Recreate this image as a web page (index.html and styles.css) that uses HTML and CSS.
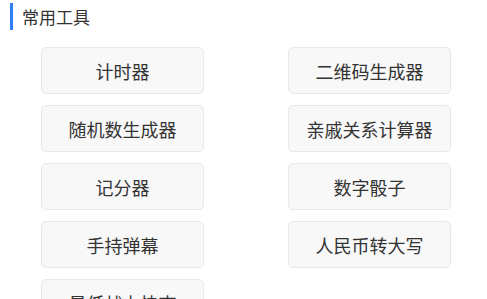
FILE: index.html
```html
<!DOCTYPE html>
<html lang="zh-CN">
<head>
    <meta charset="UTF-8">
    <meta name="viewport" content="width=device-width, initial-scale=1.0">
    <title>常用工具</title>
    <link rel="stylesheet" href="styles.css">
</head>
<body>
    <div class="section">
        <div class="section-title">常用工具</div>
        <div class="tool-grid">
            <button class="tool">计时器</button>
            <button class="tool">二维码生成器</button>
            <button class="tool">随机数生成器</button>
            <button class="tool">亲戚关系计算器</button>
            <button class="tool">记分器</button>
            <button class="tool">数字骰子</button>
            <button class="tool">手持弹幕</button>
            <button class="tool">人民币转大写</button>
            <button class="tool">最低战力快查</button>
        </div>
    </div>
</body>
</html>
```

FILE: styles.css
```css
body {
    margin: 0;
    background-color: #fff;
    font-family: "Noto Sans CJK SC", "Noto Sans", sans-serif;
    color: #333;
    overflow: hidden;
}
.section {
    padding-top: 3px;
}
.section-title {
    margin-left: 10px;
    padding-left: 9px;
    border-left: 3px solid #2f80f5;
    font-size: 17px;
    line-height: 27px;
}
.tool-grid {
    display: grid;
    grid-template-columns: 163px 163px;
    column-gap: 84px;
    row-gap: 11px;
    padding-left: 41px;
    margin-top: 17px;
}
.tool {
    height: 47px;
    background-color: #f8f8f8;
    border: 1px solid #e8e8e8;
    border-radius: 5px;
    font-family: inherit;
    font-size: 18px;
    color: #333;
    padding: 0;
    cursor: pointer;
}
```
